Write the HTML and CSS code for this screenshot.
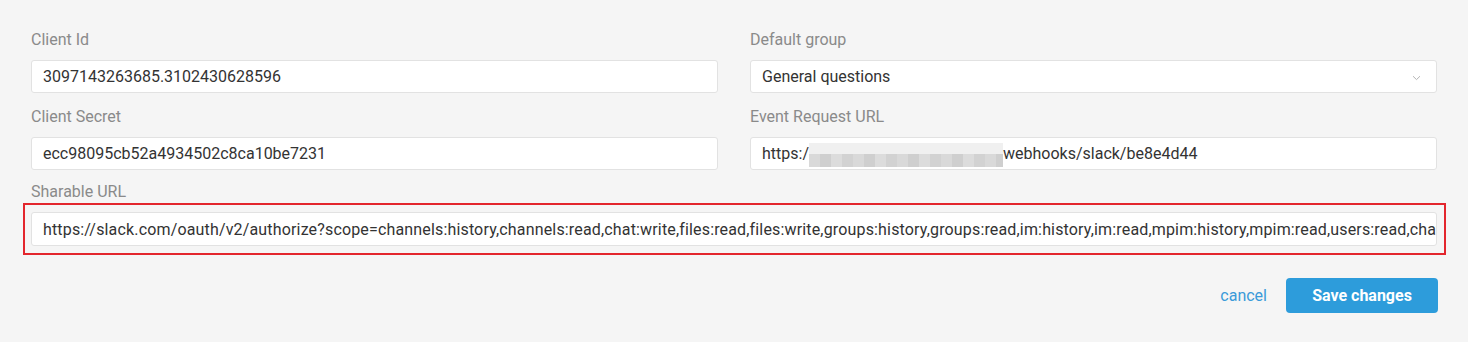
FILE: index.html
```html
<!DOCTYPE html>
<html lang="en">
	<head>
		<meta charset="UTF-8" />
		<meta name="viewport" content="width=device-width, initial-scale=1.0" />
		<title>Slack integration</title>
		<link rel="stylesheet" href="styles.css">
	</head>

	<body>
		<div class="settings">
			<div class="form-grid">
				<div class="field">
					<label class="field-label">Client Id</label>
					<div class="field-input">3097143263685.3102430628596</div>
				</div>
				<div class="field">
					<label class="field-label">Default group</label>
					<div class="field-input select">
						<span>General questions</span>
						<svg class="chevron" width="9" height="6" viewBox="0 0 9 6">
							<path d="M1 1.2 L4.5 4.6 L8 1.2" fill="none" stroke="#b4b4b4" stroke-width="1" />
						</svg>
					</div>
				</div>
				<div class="field">
					<label class="field-label">Client Secret</label>
					<div class="field-input">ecc98095cb52a4934502c8ca10be7231</div>
				</div>
				<div class="field">
					<label class="field-label">Event Request URL</label>
					<div class="field-input">https:/<span class="blurred"></span>webhooks/slack/be8e4d44</div>
				</div>
			</div>

			<div class="field field-wide">
				<label class="field-label">Sharable URL</label>
				<div class="highlight-frame">
					<div class="field-input long-text">https://slack.com/oauth/v2/authorize?scope=channels:history,channels:read,chat:write,files:read,files:write,groups:history,groups:read,im:history,im:read,mpim:history,mpim:read,users:read,chat:write.customize,users:read.email&amp;client_id=3097143263685.3102430628596</div>
				</div>
			</div>

			<div class="actions">
				<a class="btn-cancel" href="#">cancel</a>
				<button class="btn-save" type="button">Save changes</button>
			</div>
		</div>
	</body>
</html>
```

FILE: styles.css
```css
html,
body {
	margin: 0;
	background: #f5f5f5;
}

.settings {
	padding: 30px 31px 0;
	font-family: Roboto, "Liberation Sans", sans-serif;
	font-size: 16px;
	color: #333;
}

.form-grid {
	display: grid;
	grid-template-columns: 1fr 1fr;
	column-gap: 32px;
	row-gap: 14px;
}

.field {
	display: flex;
	flex-direction: column;
}

.field-wide {
	margin-top: 12px;
}

.field-label {
	line-height: 20px;
	color: #8a8a8a;
	margin-bottom: 10px;
}

.field-wide .field-label {
	margin-bottom: 1px;
}

.field-input {
	height: 33px;
	box-sizing: border-box;
	display: flex;
	align-items: center;
	padding: 0 11px;
	background: #fff;
	border: 1px solid #e2e2e2;
	border-radius: 3px;
	white-space: nowrap;
	overflow: hidden;
}

.field-input.select {
	justify-content: space-between;
	padding-right: 15px;
}

.chevron {
	flex-shrink: 0;
	margin-top: 2px;
}

.blurred {
	display: inline-block;
	width: 194px;
	height: 24px;
	margin-top: 2px;
	background:
		linear-gradient(to bottom, #f0f0f0 0 45%, transparent 45%),
		repeating-linear-gradient(to right, #d9d9d9 0 11px, #cfcfcf 11px 22px, #dcdcdc 22px 33px, #d2d2d2 33px 44px);
	background-color: #e6e6e6;
}

.highlight-frame {
	border: 2px solid #e3262d;
	padding: 7px 7px 7px 6px;
	margin: 0 -9px 0 -8px;
}

.field-input.long-text {
	height: 34px;
	letter-spacing: 0.16px;
}

.actions {
	display: flex;
	justify-content: flex-end;
	align-items: center;
	gap: 19px;
	margin-top: 23px;
}

.btn-cancel {
	color: #3a9ad9;
	text-decoration: none;
	font-size: 16px;
}

.btn-save {
	width: 152px;
	height: 35px;
	margin-right: -1px;
	border: none;
	border-radius: 4px;
	background: #2d9cdb;
	color: #fff;
	font-family: Roboto, "Liberation Sans", sans-serif;
	font-size: 16px;
	font-weight: 700;
	cursor: pointer;
}
```
